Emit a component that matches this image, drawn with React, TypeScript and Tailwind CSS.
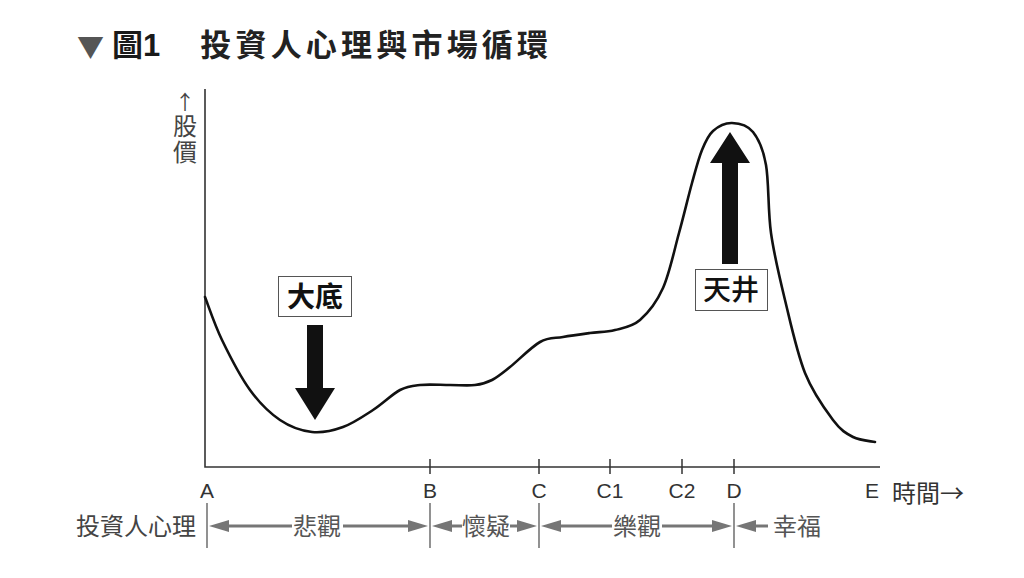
import React from "react";

type Pt = [number, number];

// price curve, page coordinates
const curve: Pt[] = [
  [205, 297], [222, 340], [250, 390], [280, 420], [312, 432], [343, 427],
  [373, 410], [400, 390], [420, 385], [450, 385], [475, 385], [492, 380],
  [510, 367], [540, 342], [563, 337], [590, 333], [615, 330], [640, 320],
  [663, 288], [679, 233], [692, 183], [702, 150], [713, 131], [732, 123],
  [753, 132], [766, 165], [771, 233], [785, 300], [805, 373], [833, 420],
  [853, 437], [875, 442],
];

function smooth(pts: Pt[]) {
  let d = `M${pts[0][0]},${pts[0][1]}`;
  for (let i = 0; i < pts.length - 1; i++) {
    const p0 = pts[i - 1] || pts[i];
    const p1 = pts[i];
    const p2 = pts[i + 1];
    const p3 = pts[i + 2] || p2;
    const c1x = p1[0] + (p2[0] - p0[0]) / 6;
    const c1y = p1[1] + (p2[1] - p0[1]) / 6;
    const c2x = p2[0] - (p3[0] - p1[0]) / 6;
    const c2y = p2[1] - (p3[1] - p1[1]) / 6;
    d += ` C${c1x},${c1y} ${c2x},${c2y} ${p2[0]},${p2[1]}`;
  }
  return d;
}

const GRAY = "#767676";
const Y = 526;

const LeftHead = ({ x }: { x: number }) => (
  <polygon points={`${x},${Y} ${x + 20},${Y - 6} ${x + 20},${Y + 6}`} fill={GRAY} />
);
const RightHead = ({ x }: { x: number }) => (
  <polygon points={`${x},${Y} ${x - 20},${Y - 6} ${x - 20},${Y + 6}`} fill={GRAY} />
);
const Seg = ({ x1, x2 }: { x1: number; x2: number }) => (
  <line x1={x1} y1={Y} x2={x2} y2={Y} stroke={GRAY} strokeWidth={3} />
);

const ticks = [
  { x: 207, label: "A", tick: false },
  { x: 430, label: "B", tick: true },
  { x: 539, label: "C", tick: true },
  { x: 610, label: "C1", tick: true },
  { x: 682, label: "C2", tick: true },
  { x: 734, label: "D", tick: true },
  { x: 872, label: "E", tick: false },
];

export default function App() {
  return (
    <div className="w-[1024px] h-[578px] bg-white overflow-hidden font-['Liberation_Sans','Noto_Sans_CJK_TC',sans-serif]">
      {/* Title */}
      <div className="h-[85px] pt-[5px] flex items-center pl-[77px]">
        <span className="text-[27px] leading-none text-[#555] font-['Noto_Sans_CJK_TC',sans-serif]">▼</span>
        <span className="ml-[8px] text-[31px] leading-none font-bold text-[#1a1a1a]">圖1</span>
        <span className="ml-[40px] text-[31px] leading-none font-bold tracking-[4.2px] text-[#222]">
          投資人心理與市場循環
        </span>
      </div>

      {/* Chart */}
      <svg width={1024} height={493} viewBox="0 85 1024 493" className="block">
        {/* y label */}
        <text x={185} y={101} fontSize={20} fill="#444" textAnchor="middle" dominantBaseline="central" className="font-['Noto_Sans_CJK_TC',sans-serif]">↑</text>
        <text x={185} y={126} fontSize={24} fill="#444" textAnchor="middle" dominantBaseline="central">股</text>
        <text x={185} y={152} fontSize={24} fill="#444" textAnchor="middle" dominantBaseline="central">價</text>

        {/* axes */}
        <polyline points="205,89 205,467 880,467" fill="none" stroke="#333" strokeWidth={1.6} />
        {ticks.filter((t) => t.tick).map((t) => (
          <line key={t.label} x1={t.x} y1={459} x2={t.x} y2={474} stroke="#333" strokeWidth={1.5} />
        ))}
        {ticks.map((t) => (
          <text key={t.label} x={t.x} y={498} fontSize={21} fill="#333" textAnchor="middle">
            {t.label}
          </text>
        ))}
        <text x={892} y={491} fontSize={24} fill="#333" dominantBaseline="central" className="font-['Noto_Sans_CJK_TC',sans-serif]">時間→</text>

        {/* curve */}
        <path d={smooth(curve)} fill="none" stroke="#111" strokeWidth={2.6} strokeLinecap="round" />

        {/* 大底 */}
        <rect x={278.5} y={276.5} width={73} height={40} fill="#fff" stroke="#555" strokeWidth={1} />
        <text x={315} y={297} fontSize={28} fontWeight={700} fill="#111" textAnchor="middle" dominantBaseline="central">大底</text>
        <polygon points="307,325 323,325 323,388 335,388 315,420 295,388 307,388" fill="#111" />

        {/* 天井 */}
        <polygon points="730,132 750,163 738,163 738,264 722,264 722,163 710,163" fill="#111" />
        <rect x={695.5} y={269.5} width={72} height={41} fill="#fff" stroke="#555" strokeWidth={1} />
        <text x={731} y={290} fontSize={28} fontWeight={500} fill="#111" textAnchor="middle" dominantBaseline="central">天井</text>

        {/* investor psychology row */}
        <text x={196} y={Y} fontSize={24} fill="#444" textAnchor="end" dominantBaseline="central">投資人心理</text>
        {[207, 430, 539, 734].map((x) => (
          <line key={x} x1={x} y1={503} x2={x} y2={548} stroke={GRAY} strokeWidth={1.6} />
        ))}

        <LeftHead x={209} />
        <Seg x1={228} x2={292} />
        <text x={317} y={Y} fontSize={24} fill="#555" textAnchor="middle" dominantBaseline="central">悲觀</text>
        <Seg x1={343} x2={410} />
        <RightHead x={428} />

        <LeftHead x={432} />
        <Seg x1={451} x2={462} />
        <text x={486} y={Y} fontSize={24} fill="#555" textAnchor="middle" dominantBaseline="central">懷疑</text>
        <Seg x1={510} x2={519} />
        <RightHead x={537} />

        <LeftHead x={541} />
        <Seg x1={560} x2={612} />
        <text x={637} y={Y} fontSize={24} fill="#555" textAnchor="middle" dominantBaseline="central">樂觀</text>
        <Seg x1={662} x2={714} />
        <RightHead x={732} />

        <LeftHead x={736} />
        <Seg x1={755} x2={768} />
        <text x={797} y={Y} fontSize={24} fill="#555" textAnchor="middle" dominantBaseline="central">幸福</text>
      </svg>
    </div>
  );
}
